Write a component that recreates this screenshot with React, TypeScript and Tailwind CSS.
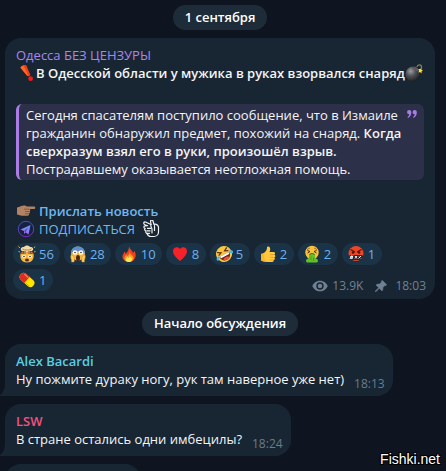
import type { ReactNode } from "react";

function Svg({ className, box = "0 0 36 36", children }: { className: string; box?: string; children: ReactNode }) {
  return (
    <svg viewBox={box} className={className} aria-hidden="true">
      {children}
    </svg>
  );
}

function ExplodingHead() {
  return (
    <Svg className="size-[18px]">
      <path d="M5 18h26c2 10-4 17-13 17S3 28 5 18z" fill="#f6b93b" />
      <path d="M6 10c-2-4 3-7 6-6 3-4 9-4 12 0 4-1 8 2 6 6-2 3-5 3-7 2v6H13v-6c-3 1-6 1-7-2z" fill="#f3d9a4" />
      <path d="M9 8c4 3 15 3 18 0M15 12v6m6-6v6" stroke="#b98245" strokeWidth="2" fill="none" />
      <path d="M5 17l4-3 4 4 5-3 5 3 4-4 4 3" fill="#f7953a" stroke="#e06a2c" strokeWidth="1.5" />
      <path d="M1 3l3 3M34 3l-2 3M1 13l3 1M35 13l-3 1" stroke="#f2a33b" strokeWidth="2" />
      <circle cx="12" cy="23" r="3.6" fill="#fff" />
      <circle cx="24" cy="23" r="3.6" fill="#fff" />
      <circle cx="12" cy="23" r="1.7" fill="#4b2a14" />
      <circle cx="24" cy="23" r="1.7" fill="#4b2a14" />
      <ellipse cx="18" cy="30" rx="4" ry="3" fill="#5b2710" />
    </Svg>
  );
}

function Screaming() {
  return (
    <Svg className="size-[18px]">
      <circle cx="18" cy="17" r="14" fill="#f5b73c" />
      <path d="M4 17C4 8 10 3 18 3s14 6 14 14C25 10 11 10 4 17z" fill="#5b8fd0" />
      <circle cx="12" cy="15" r="4.600" fill="#fff" />
      <circle cx="24" cy="15" r="4.600" fill="#fff" />
      <circle cx="12" cy="15" r="1.600" fill="#3a2415" />
      <circle cx="24" cy="15" r="1.600" fill="#3a2415" />
      <ellipse cx="18" cy="26" rx="4" ry="6" fill="#4a2414" />
      <path d="M4 20c3-1 4 1 6 5 1 4 1 6 0 9H5c1-5-3-8-1-14zM32 20c-3-1-4 1-6 5-1 4-1 6 0 9h5c-1-5 3-8 1-14z" fill="#ffd05a" stroke="#c88427" strokeWidth="1" />
    </Svg>
  );
}

function Fire() {
  return (
    <Svg className="size-[18px]">
      <path d="M18 3c2 6 7 8 8 13 2-1 2-3 2-5 3 4 4 8 3 13-2 6-7 10-13 10S6 30 5 25c-1-5 3-8 4-12 2 2 2 3 2 5 4-4 7-8 7-15z" fill="#f4411d" />
      <path d="M18 12c1 6 8 8 9 13 1 5-4 9-9 9s-10-3-9-8c0-4 3-5 4-7 1 1 2 2 2 3 3-2 4-6 3-10z" fill="#ff9b1f" />
      <path d="M19 20c0 4 5 5 5 8 0 4-3 6-6 6s-7-2-6-5c0-3 2-4 3-6 1 1 1 2 2 3 1-2 2-3 2-6z" fill="#ffe55c" />
    </Svg>
  );
}

function Heart() {
  return (
    <Svg className="size-[18px]">
      <path d="M18 32C12 27 4 20 4 12c0-8 10-10 14-4 4-6 14-4 14 4 0 8-8 15-14 20z" fill="#f5222a" />
    </Svg>
  );
}

function Rofl() {
  return (
    <Svg className="size-[18px]">
      <g transform="rotate(-28 18 18)">
        <circle cx="18" cy="18" r="16" fill="#fbc43d" />
        <path d="M7 9l7 4-7 3M29 9l-7 4 7 3" stroke="#5a3212" strokeWidth="2.400" fill="none" />
        <path d="M7 19h22c0 8-5 12-11 12S7 27 7 19z" fill="#6d2812" />
        <path d="M8 19h20l-1 4H9z" fill="#fff" />
        <path d="M11 28c4-4 10-4 14 0-4 4-10 4-14 0z" fill="#ee4d4b" />
        <path d="M7 17c-6 0-8 3-7 6s6 2 7-6zM29 17c6 0 8 3 7 6s-6 2-7-6z" fill="#4cb6ee" />
      </g>
    </Svg>
  );
}

function ThumbUp() {
  return (
    <Svg className="size-[18px]">
      <path d="M4 18c3-1 6-2 8-4 3-3 4-6 4-9 0-3 5-3 6 1 1 3 0 5-1 8h8c4 0 4 5 1 5 4 1 3 6 0 6 3 1 2 5-1 5 1 2 0 4-3 4H14c-4 0-7-2-10-3z" fill="#ffc83a" />
      <path d="M22 19h8M22 25h8M21 30h7" stroke="#dd942a" strokeWidth="1.300" />
      <path d="M4 18v13c4 1 6 3 10 3h6c-8-2-11-7-9-17z" fill="#f0a62c" opacity=".55" />
    </Svg>
  );
}

function Vomiting() {
  return (
    <Svg className="size-[18px]">
      <circle cx="18" cy="15" r="13.500" fill="#f9c13c" />
      <path d="M8 9l6-3M28 9l-6-3" stroke="#8a5518" strokeWidth="1.500" />
      <path d="M9 11l5 2-5 3M27 11l-5 2 5 3" stroke="#4e2c10" strokeWidth="2" fill="none" />
      <path d="M12 21c0-6 12-6 12 0v4c2 3 6 3 6 7 0 4-5 3-12 3S6 36 6 32c0-4 4-4 6-7z" fill="#66bf27" />
      <path d="M13 20c1-4 9-4 10 0" stroke="#43651a" strokeWidth="2" fill="none" />
      <path d="M16 23v7m5-5v7" stroke="#419316" strokeWidth="1.500" />
    </Svg>
  );
}

function Cursing() {
  return (
    <Svg className="size-[18px]">
      <circle cx="18" cy="17" r="15" fill="#ee4524" />
      <path d="M7 9l9 5M29 9l-9 5" stroke="#5b160b" strokeWidth="2.600" />
      <circle cx="12" cy="15" r="2.500" fill="#4b130a" />
      <circle cx="24" cy="15" r="2.500" fill="#4b130a" />
      <rect x="4" y="20" width="28" height="10" rx="3" fill="#30252a" />
      <path d="M9 21l-3 7m1-5h5m-5 3h5m0-5l-3 7M16 22l4 5m0-5l-4 5M23 27l5-5m-4 0v1m4 3v1" stroke="#fff" strokeWidth="1.800" />
    </Svg>
  );
}

function Pill() {
  return (
    <Svg className="size-[18px]">
      <g transform="rotate(42 18 18)">
        <rect x="1" y="10" width="34" height="16" rx="8" fill="#ffe500" />
        <path d="M18 10H9a8 8 0 0 0 0 16h9z" fill="#de2d20" />
        <path d="M7 13h9" stroke="#ff8876" strokeWidth="2" strokeLinecap="round" />
        <path d="M21 24h8" stroke="#cfa600" strokeWidth="1.500" strokeLinecap="round" />
      </g>
    </Svg>
  );
}

function Exclamation() {
  return (
    <Svg className="h-[18px] w-5 shrink-0" box="0 0 20 18">
      <path d="M4.500 3.800C4.300 2 9.300-.2 10.400 1.500L14.200 10.500c.3 1.500-2 2.500-3 1.200z" fill="#f33c1c" />
      <path d="M4.500 3.800l6.700 7.900 1-.5L7.500 1.400C5.800 2 4.500 2.800 4.500 3.800z" fill="#ff6a20" />
      <circle cx="14.600" cy="14.700" r="2.400" fill="#f01c16" />
    </Svg>
  );
}

function Bomb() {
  return (
    <Svg className="size-[18px] shrink-0">
      <defs>
        <radialGradient id="bomb" cx="35%" cy="32%" r="70%">
          <stop offset="0" stopColor="#9b9da0" />
          <stop offset=".45" stopColor="#505255" />
          <stop offset="1" stopColor="#1d1f22" />
        </radialGradient>
      </defs>
      <circle cx="16" cy="20" r="15" fill="url(#bomb)" />
      <path d="M20 5l8 6-3 4-8-6z" fill="#5a5c5f" />
      <path d="M24 6c1-6 9-5 9 0v5" stroke="#8f7c5c" strokeWidth="2.400" fill="none" />
      <path d="M32 9l1 3 3 1-3 2v4l-3-3-3 1 1-4-1-3h3z" fill="#ffe13a" />
    </Svg>
  );
}

function PointRight() {
  return (
    <Svg className="h-[18px] w-5 shrink-0" box="0 0 20 18">
      <path d="M1 5.500C4 5 6 3.200 9 3.600l2 .8h7c1.700 0 1.700 2.600 0 2.600h-4.500c1.200.5 1 2.200 0 2.400 .8.700.5 2-.5 2.200.5 1.200-.3 2.200-1.500 2.200H6c-2 0-3-1-5-1.200z" fill="#b28362" />
      <path d="M8 7.200h5.500M9 9.500h4.500M9 11.700h4" stroke="#79513b" strokeWidth=".8" />
    </Svg>
  );
}

function PlaneBadge() {
  return (
    <Svg className="h-[18px] w-5 shrink-0" box="0 0 20 18">
      <defs>
        <linearGradient id="ring" x1="0" y1="0" x2="0" y2="1">
          <stop offset="0" stopColor="#315bb8" />
          <stop offset="1" stopColor="#7630b4" />
        </linearGradient>
        <linearGradient id="plane" x1="0" y1="0" x2="0" y2="1">
          <stop offset="0" stopColor="#5c9df5" />
          <stop offset="1" stopColor="#a66bf4" />
        </linearGradient>
      </defs>
      <circle cx="10" cy="9" r="7.700" fill="#1a2042" stroke="url(#ring)" />
      <path d="M4.500 9.500L14.500 5l-2 9.500-3-2.300-1.500 1.700v-3z" fill="url(#plane)" />
      <path d="M8 11l4-3.500-2.500 4.700" fill="#5047a5" />
    </Svg>
  );
}

function OutlineThumb() {
  return (
    <Svg className="ml-1 h-[18px] w-5 shrink-0" box="0 0 20 18">
      <g fill="none" stroke="#f1f4f6" strokeWidth="1.200" strokeLinejoin="round" strokeLinecap="round">
        <path d="M9 4L8.500 1.500C8.500-.2 10.500-.2 11 1l1 3.500c2-1 4 .5 4.500 2.500v5c0 2.500-2 4.500-4.500 4.500H9c-2 0-3.500-1.500-4-3" />
        <path d="M9 4.500L3.500 2C1.500 1.500 1 4 3 4.800l2.500.9-2.500.2c-1.600.2-1.400 2.500.2 2.500-1 .7-.6 2.400.7 2.400-.6 1.200.1 2.500 1.100 2.500h2.500" />
        <path d="M9 4.500C8 7 10 7 10 9.500V13M12.500 5.500v5M5.500 8.400h3M5 10.900h3" />
      </g>
    </Svg>
  );
}

function Eye() {
  return (
    <Svg className="h-3 w-4" box="0 0 16 12">
      <path d="M8 .700C4.300.700 1.500 3 .300 6 1.500 9 4.300 11.300 8 11.300S14.500 9 15.700 6C14.500 3 11.700.700 8 .700z" fill="#6f8294" />
      <circle cx="8" cy="6" r="3.700" fill="#182633" />
      <circle cx="8" cy="6" r="2.200" fill="#6f8294" />
    </Svg>
  );
}

function Pin() {
  return (
    <Svg className="ml-2 size-3" box="0 0 12 12">
      <path d="M7.200.300l4.500 4.500-1 .9-.9-.2-2 2.300c.3 1.300 0 2.300-.8 3.200L4.300 8.300 1 11.700H.300V11l3.400-3.300L1 5c.9-.8 2-1.100 3.200-.8l2.300-2-.2-1z" fill="#6f8294" stroke="#6f8294" strokeWidth=".5" />
    </Svg>
  );
}

const reactions = [
  { name: "Взрыв мозга", icon: <ExplodingHead />, count: 56 },
  { name: "Ужас", icon: <Screaming />, count: 28 },
  { name: "Огонь", icon: <Fire />, count: 10 },
  { name: "Сердце", icon: <Heart />, count: 8 },
  { name: "Смех", icon: <Rofl />, count: 5 },
  { name: "Нравится", icon: <ThumbUp />, count: 2 },
  { name: "Тошнота", icon: <Vomiting />, count: 2 },
  { name: "Злость", icon: <Cursing />, count: 1 },
  { name: "Таблетка", icon: <Pill />, count: 1 },
];

function ServicePill({ children }: { children: ReactNode }) {
  return (
    <div className="flex justify-center">
      <span className="rounded-full bg-[#1e2c3a] px-3 pt-[3px] pb-1 font-semibold text-white">{children}</span>
    </div>
  );
}

function Bubble({ children }: { children: ReactNode }) {
  return (
    <div className="relative w-fit rounded-2xl rounded-bl-none bg-[#182633] py-2 pr-2 pl-[11px]">
      <svg viewBox="0 0 5 14" className="absolute bottom-0 -left-[5px] h-3.5 w-[5px]" aria-hidden="true">
        <path d="M5 0C5 7 3 11 0 13v1h5z" fill="#182633" />
      </svg>
      {children}
    </div>
  );
}

function Comment({ name, color, text, time }: { name: string; color: string; text: string; time: string }) {
  return (
    <Bubble>
      <div className={`font-semibold ${color}`}>{name}</div>
      <div className="flex gap-2.5">
        <p>{text}</p>
        <time className="pt-[5px] -mb-[5px] text-xs leading-[18px] text-[#697b8c]">{time}</time>
      </div>
    </Bubble>
  );
}

export default function App() {
  return (
    <main className="relative h-screen overflow-hidden bg-[#0e1520] font-['Open_Sans','Noto_Sans',sans-serif] text-[13px] leading-[18px] text-[#f3f5f7]">
      <div className="flex flex-col gap-2 pt-[5px] pr-[11px] pl-[5px]">
        <ServicePill>1 сентября</ServicePill>

        <article className="rounded-2xl bg-[#182633] pt-2 pb-2">
          <div className="px-[11px]">
            <div className="font-medium text-[#a986ee]">Одесса БЕЗ ЦЕНЗУРЫ</div>
            <h1 className="flex font-semibold">
              <Exclamation />
              <span className="whitespace-nowrap">В Одесской области у мужика в руках взорвался снаряд</span>
              <Bomb />
            </h1>
            <blockquote className="relative mt-[22px] rounded-md border-l-[3px] border-[#a97de5] bg-[#2c3049] py-0.5 pr-4 pl-[7px]">
              Сегодня спасателям поступило сообщение, что в Измаиле гражданин обнаружил предмет, похожий на снаряд.{" "}
              <strong className="font-semibold">Когда сверхразум взял его в руки, произошёл взрыв.</strong>
              <br />
              Пострадавшему оказывается неотложная помощь.
              <svg viewBox="0 0 10 8" className="absolute top-1.5 right-[7px] h-2 w-2.5" aria-hidden="true">
                <path d="M2.200 0a2.100 2.100 0 0 1 2.100 2.200C4.300 5 3.200 7 1 8L.500 7C1.600 6.300 2.100 5.500 2.200 4.300A2.100 2.100 0 0 1 2.200 0zM7.700 0a2.100 2.100 0 0 1 2.100 2.200C9.800 5 8.700 7 6.500 8L6 7c1.100-.7 1.600-1.500 1.700-2.700a2.100 2.100 0 0 1 0-4.300z" fill="#a97de5" />
              </svg>
            </blockquote>
            <div className="mt-[22px] font-semibold text-[#70b6ef]">
              <a href="#news" className="flex w-fit gap-[3px]">
                <PointRight />
                Прислать новость
              </a>
              <a href="#subscribe" className="flex w-fit gap-[3px]">
                <PlaneBadge />
                <span className="font-medium">ПОДПИСАТЬСЯ</span>
                <OutlineThumb />
              </a>
            </div>
          </div>

          <div className="relative mt-[5px] px-2">
            <div className="flex max-w-[380px] flex-wrap gap-1">
              {reactions.map((r) => (
                <button
                  key={r.name}
                  type="button"
                  aria-label={`${r.name}: ${r.count}`}
                  className="flex h-[22px] min-w-10 items-center gap-[3px] rounded-full bg-[#1b3347] pr-1.5 pl-[5px] font-medium text-[#70b0ee]"
                >
                  {r.icon}
                  {r.count}
                </button>
              ))}
            </div>
            <div className="absolute right-[9px] -bottom-1 flex items-center gap-1 text-xs leading-[18px] text-[#6f8294]">
              <Eye />
              <span>13.9K</span>
              <Pin />
              <time className="ml-1">18:03</time>
            </div>
          </div>
        </article>

        <div className="pt-1">
          <ServicePill>Начало обсуждения</ServicePill>
        </div>

        <Comment name="Alex Bacardi" color="text-[#5bcfe0]" text="Ну пожмите дураку ногу, рук там наверное уже нет)" time="18:13" />
        <Comment name="LSW" color="text-[#f5507f]" text="В стране остались одни имбецилы?" time="18:24" />
        <Bubble>
          <div className="h-9 w-[117px]" />
        </Bubble>
      </div>

      <a
        href="#fishki"
        className="absolute right-1.5 bottom-1 font-['Liberation_Sans',Arial,sans-serif] text-sm leading-4 text-white [text-shadow:-1px_-1px_0_#000,1px_-1px_0_#000,-1px_1px_0_#000,1px_1px_0_#000]"
      >
        Fishki.net
      </a>
    </main>
  );
}
